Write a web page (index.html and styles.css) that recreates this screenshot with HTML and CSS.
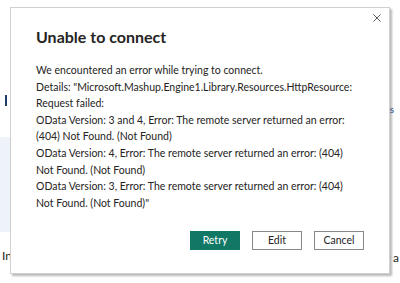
FILE: index.html
```html
<!DOCTYPE html>
<html>
<head>
<meta charset="utf-8">
<link rel="stylesheet" href="styles.css">
</head>
<body>
<div class="page">
  <div class="bg-left">
    <span class="bg-bar"></span>
    <div class="bg-panel"></div>
    <span class="bg-text">In</span>
  </div>
  <div class="bg-right">
    <span class="bg-glyph">s</span>
    <span class="bg-text">y a</span>
  </div>

  <div class="dialog">
    <button class="close" aria-label="Close">
      <svg width="8" height="8" viewBox="0 0 8 8"><path d="M0.4 0.4 L7.6 7.6 M7.6 0.4 L0.4 7.6" stroke="#605e5c" stroke-width="1" fill="none"/></svg>
    </button>
    <h1 class="title">Unable to connect</h1>
    <div class="message">
      <p>We encountered an error while trying to connect.</p>
      <p>Details: "Microsoft.Mashup.Engine1.Library.Resources.HttpResource:<br>Request failed:<br>OData Version: 3 and 4, Error: The remote server returned an error:<br>(404) Not Found. (Not Found)<br>OData Version: 4, Error: The remote server returned an error: (404)<br>Not Found. (Not Found)<br>OData Version: 3, Error: The remote server returned an error: (404)<br>Not Found. (Not Found)"</p>
    </div>
    <div class="actions">
      <button class="btn primary">Retry</button>
      <button class="btn">Edit</button>
      <button class="btn">Cancel</button>
    </div>
  </div>
</div>
</body>
</html>
```

FILE: styles.css
```css
html, body {
  margin: 0;
  padding: 0;
  background: #ffffff;
  font-family: Lato, "Open Sans", sans-serif;
  color: #252423;
}

.page {
  position: relative;
  width: 400px;
  height: 283px;
  overflow: hidden;
  display: flex;
  justify-content: space-between;
}

.bg-left {
  width: 10px;
  display: flex;
  flex-direction: column;
}

.bg-bar {
  display: block;
  width: 2px;
  height: 11px;
  margin: 95px 0 0 5px;
  background: #1f3a64;
}

.bg-panel {
  height: 95px;
  margin-top: 31px;
  background: #eef3f9;
}

.bg-text {
  font-size: 12px;
  line-height: 16px;
  margin-top: 16px;
  margin-left: 2px;
  color: #252423;
  white-space: nowrap;
}

.bg-right {
  width: 14px;
  display: flex;
  flex-direction: column;
  align-items: flex-end;
}

.bg-glyph {
  font-size: 10px;
  line-height: 10px;
  margin-top: 104px;
  margin-right: 6px;
  color: #1f5aa0;
}

.bg-right .bg-text {
  margin-top: 136px;
  margin-left: 0;
  margin-right: 1px;
}

.dialog {
  position: absolute;
  left: 10px;
  top: 7px;
  width: 380px;
  height: 267px;
  background: #ffffff;
  border: 1px solid #d2d0ce;
  box-shadow: 2px 2px 2px rgba(0, 0, 0, 0.28);
  padding: 0 25px 0 25px;
  box-sizing: border-box;
  display: flex;
  flex-direction: column;
}

.close {
  position: absolute;
  top: 6px;
  right: 8px;
  width: 8px;
  height: 8px;
  padding: 0;
  border: 0;
  background: none;
  display: flex;
}

.title {
  margin: 18px 0 0 0;
  font-size: 16px;
  font-weight: 700;
  line-height: 21px;
  color: #252423;
}

.message {
  margin-top: 15px;
  font-size: 10.5px;
  line-height: 16.6px;
  white-space: nowrap;
}

.message p {
  margin: 0;
}

.actions {
  margin-top: auto;
  margin-bottom: 23px;
  display: flex;
  justify-content: flex-end;
  gap: 12px;
}

.btn {
  width: 50px;
  height: 19px;
  padding: 0;
  border: 1px solid #8a8886;
  background: #ffffff;
  color: #252423;
  font-family: Lato, "Open Sans", sans-serif;
  font-size: 10.5px;
  line-height: 17px;
}

.btn.primary {
  background: #117865;
  border-color: #117865;
  color: #ffffff;
}
```
